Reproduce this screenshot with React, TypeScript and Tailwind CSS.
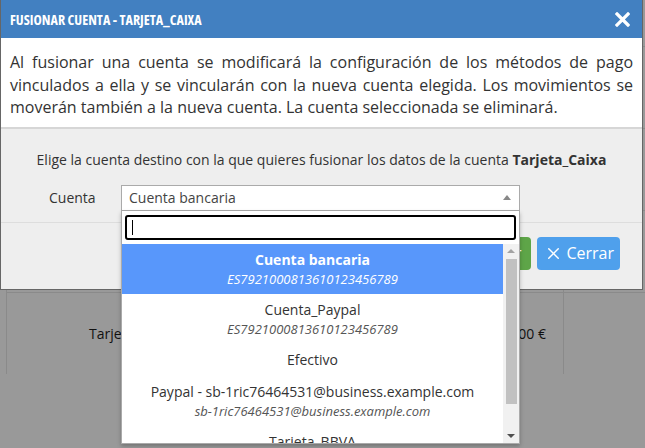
import { X } from "lucide-react";

const options = [
  { title: "Cuenta bancaria", sub: "ES7921000813610123456789", active: true },
  { title: "Cuenta_Paypal", sub: "ES7921000813610123456789" },
  { title: "Efectivo" },
  { title: "Paypal - sb-1ric76464531@business.example.com", sub: "sb-1ric76464531@business.example.com" },
  { title: "Tarjeta_BBVA", sub: "ES7921000813610123456789" },
];

function BackgroundRows() {
  return (
    <div className="pt-[46px]">
      {[0, 1, 2, 3].map((i) => (
        <div key={i} className="ml-[6px] flex h-[82px] border-t border-l border-[#8a8a8a] text-[14px] text-[#111]">
          <div className="flex w-[300px] items-center pl-[82px]">Tarjeta_Caixa</div>
          <div className="flex w-[256px] items-center justify-end pr-[17px]">100,00 €</div>
          <div className="flex-1 border-l border-[#8a8a8a]" />
        </div>
      ))}
    </div>
  );
}

function AccountSelect() {
  return (
    <div className="relative">
      <div className="flex h-[26px] w-[399px] items-center justify-between border border-[#aaa] bg-white pl-[7px] pr-[8px] text-[14px] text-[#444]">
        <span>Cuenta bancaria</span>
        <span className="h-0 w-0 border-x-[4px] border-b-[5px] border-x-transparent border-b-[#888]" />
      </div>

      <div className="absolute left-0 top-[26px] z-20 flex h-[233px] w-[399px] flex-col border border-t-0 border-[#aaa] bg-white shadow-[0_2px_4px_rgba(0,0,0,0.25)]">
        <div className="px-[3px] pb-[4px] pt-[4px]">
          <div className="flex h-[25px] items-center rounded-[3px] border-2 border-black bg-white px-[5px]">
            <span className="h-[15px] w-px bg-black" />
          </div>
        </div>
        <div className="flex min-h-0 flex-1">
          <ul className="min-w-0 flex-1 overflow-hidden">
            {options.map((o) => (
              <li
                key={o.title}
                className={
                  "py-[6px] text-center " + (o.active ? "bg-[#5897fb] text-white" : "text-[#333]")
                }
              >
                <div className={"text-[14px] leading-[20px] " + (o.active ? "font-bold" : "")}>{o.title}</div>
                {o.sub && (
                  <div className={"text-[13px] italic leading-[18px] " + (o.active ? "text-white" : "text-[#555]")}>
                    {o.sub}
                  </div>
                )}
              </li>
            ))}
          </ul>
          <div className="flex w-[16px] flex-col items-center bg-[#f1f1f1] py-[5px]">
            <span className="h-0 w-0 border-x-[4px] border-b-[4px] border-x-transparent border-b-[#a3a3a3]" />
            <div className="mt-[6px] h-[145px] w-[11px] bg-[#c1c1c1]" />
            <div className="flex-1" />
            <span className="h-0 w-0 border-x-[4px] border-t-[4px] border-x-transparent border-t-[#505050]" />
          </div>
        </div>
      </div>
    </div>
  );
}

export default function App() {
  return (
    <div className="relative h-[448px] w-[645px] overflow-hidden bg-[#999] font-['Open_Sans',sans-serif]">
      <BackgroundRows />

      <div className="absolute left-0 top-0 w-[643px] border-x border-b border-[#666] bg-[#eee]">
        <div className="flex h-[38px] items-center justify-between bg-[#4280c1] pl-[9px] pr-[12px] text-white">
          <h4 className="text-[14px] font-bold font-stretch-condensed">FUSIONAR CUENTA - TARJETA_CAIXA</h4>
          <svg width="15" height="15" viewBox="0 0 15 15" fill="none">
            <path d="M2 2 L13 13 M13 2 L2 13" stroke="white" strokeWidth="3.2" strokeLinecap="square" />
          </svg>
        </div>

        <div className="border-b-2 border-[#d6d6d6] bg-white px-[9px] pb-[8px] pt-[13px] text-justify text-[16px] leading-[22.5px] text-[#333]">
          Al fusionar una cuenta se modificará la configuración de los métodos de pago vinculados a ella y se
          vincularán con la nueva cuenta elegida. Los movimientos se moverán también a la nueva cuenta. La cuenta
          seleccionada se eliminará.
        </div>

        <div className="relative z-10 border-b border-[#ddd] pb-[11px] pt-[21px]">
          <p className="text-center text-[14px] leading-[20px] text-[#333]">
            Elige la cuenta destino con la que quieres fusionar los datos de la cuenta{" "}
            <b className="font-bold">Tarjeta_Caixa</b>
          </p>
          <div className="mt-[15px] flex items-center">
            <label className="w-[120px] pl-[48px] text-[14px] text-[#333]">Cuenta</label>
            <AccountSelect />
          </div>
        </div>

        <div className="flex h-[66px] items-start justify-end gap-[6px] pr-[22px] pt-[14px]">
          <button className="flex h-[33px] items-center gap-[4px] rounded-[4px] bg-[#5ea548] px-[10px] text-[16px] text-white">
            Fusionar
          </button>
          <button className="flex h-[33px] items-center gap-[3px] rounded-[4px] bg-[#4fa0ec] pl-[7px] pr-[6px] text-[16px] text-white">
            <X size={19} strokeWidth={1.8} />
            Cerrar
          </button>
        </div>
      </div>
    </div>
  );
}
